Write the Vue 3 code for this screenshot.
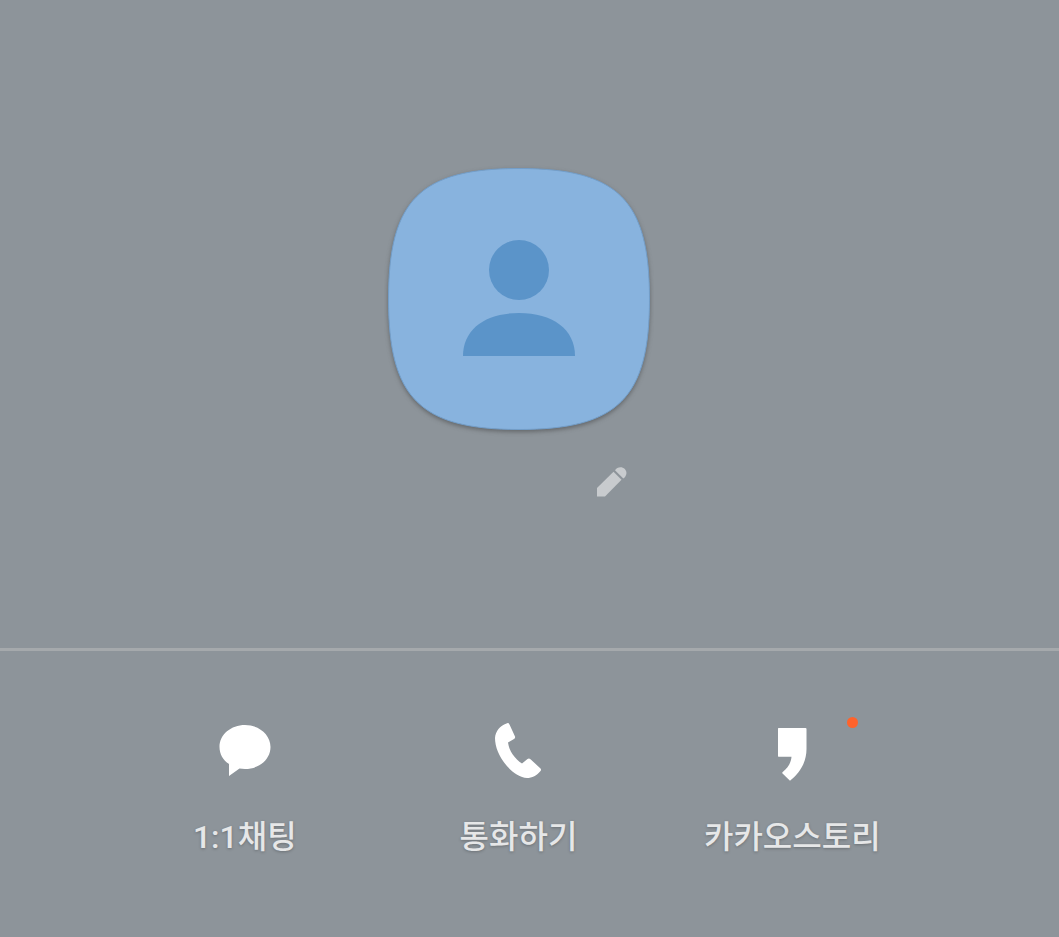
<template>
  <main class="profile">
    <section class="profile-top">
      <button class="avatar" type="button" aria-label="프로필 사진">
        <svg width="270" height="276" viewBox="-4 -4 270 276">
          <path
            class="avatar-bg"
            d="M131 .5C230 .5 261.500 32 261.500 131S230 261.500 131 261.500 .5 230 .5 131 32 .5 131 .5Z"
          />
          <circle class="avatar-person" cx="131" cy="102" r="30" />
          <path class="avatar-person" d="M75 188C75 161 97.500 145 131 145S187 161 187 188Z" />
        </svg>
      </button>
      <div class="name-row">
        <button class="edit" type="button" aria-label="이름 편집">
          <svg width="30" height="30" viewBox="0 0 30 30">
            <path d="M0 21L16.500 4.800L24.500 12.800L8 29.500H0Z" />
            <path d="M18 3.300C20-.2 25-.8 27.800 2C30.600 5 29.600 9.500 26.300 11.500Z" />
          </svg>
        </button>
      </div>
    </section>

    <nav class="actions">
      <button v-for="item in actions" :key="item.label" class="action" type="button">
        <span class="icon">
          <svg width="60" height="64" viewBox="0 0 60 64">
            <path :d="item.path" />
          </svg>
          <span v-if="item.isNew" class="badge"></span>
        </span>
        <span class="label">{{ item.label }}</span>
      </button>
    </nav>
  </main>
</template>

<script setup>
const actions = [
  {
    label: "1:1채팅",
    path: "M30 7C44 7 55.500 16.500 55.500 29S44 51 30 51C28 51 26 50.800 24.500 50.500L14 58V46C8 42 4.500 36 4.500 29C4.500 16.500 16 7 30 7Z",
  },
  {
    label: "통화하기",
    path: "M18.500 5.500Q20.500 4.400 21.500 6.500L27 18.500Q27.500 20 26 21L20 24.500C21 33 27 41 34 45.500L39.500 41Q41 40 42.500 41.200L52.500 50.500Q53.500 51.500 52.500 53C49 57.500 44 60 39 60C24 58.500 7 38 7 20C7.500 13 12 8 18.500 5.500Z",
  },
  {
    label: "카카오스토리",
    isNew: true,
    path: "M16 10H43.500Q44.500 10 44.500 11V31C44.500 44 38 55 28 62.700L20.300 55.300Q20 54.500 21 53.800C26 49.500 29 45 29.500 38.700H16.500Q16 38.700 16 38V11Q16 10 16.500 10Z",
  },
];
</script>

<style>
body {
  margin: 0;
  background: #8d949a;
}
</style>

<style scoped>
.profile {
  min-height: 100vh;
  background: #8d949a;
  font-family: Roboto, "Noto Sans CJK KR", sans-serif;
}
button {
  padding: 0;
  border: none;
  background: none;
  color: inherit;
  font: inherit;
  cursor: pointer;
}
svg {
  display: block;
}
.profile-top {
  display: flex;
  flex-direction: column;
  align-items: center;
  gap: 27px;
  padding: 164px 21px 151px 0;
  border-bottom: 3px solid #a5a9ac;
}
.avatar-bg {
  fill: #88b3de;
  stroke: #739ec9;
  stroke-width: 1;
  filter: drop-shadow(0 2px 2px rgba(60, 60, 60, 0.5));
}
.avatar-person {
  fill: #5b94c9;
}
.name-row {
  display: flex;
  justify-content: flex-end;
  width: 216px;
}
.edit {
  fill: #c8cbce;
}
.actions {
  display: flex;
  justify-content: center;
  padding: 67px 22px 70px 0;
}
.action {
  display: flex;
  flex-direction: column;
  align-items: center;
  gap: 31px;
  width: 26.4%;
}
.icon {
  position: relative;
  fill: #fff;
}
.badge {
  position: absolute;
  top: -1px;
  right: -36px;
  width: 11px;
  height: 11px;
  border-radius: 50%;
  background: #ff632b;
}
.label {
  color: #e6e7e8;
  font-size: 32px;
  font-weight: 500;
  line-height: 48px;
  white-space: nowrap;
  text-shadow: 0 1px 3px rgba(0, 0, 0, 0.25);
}
</style>
